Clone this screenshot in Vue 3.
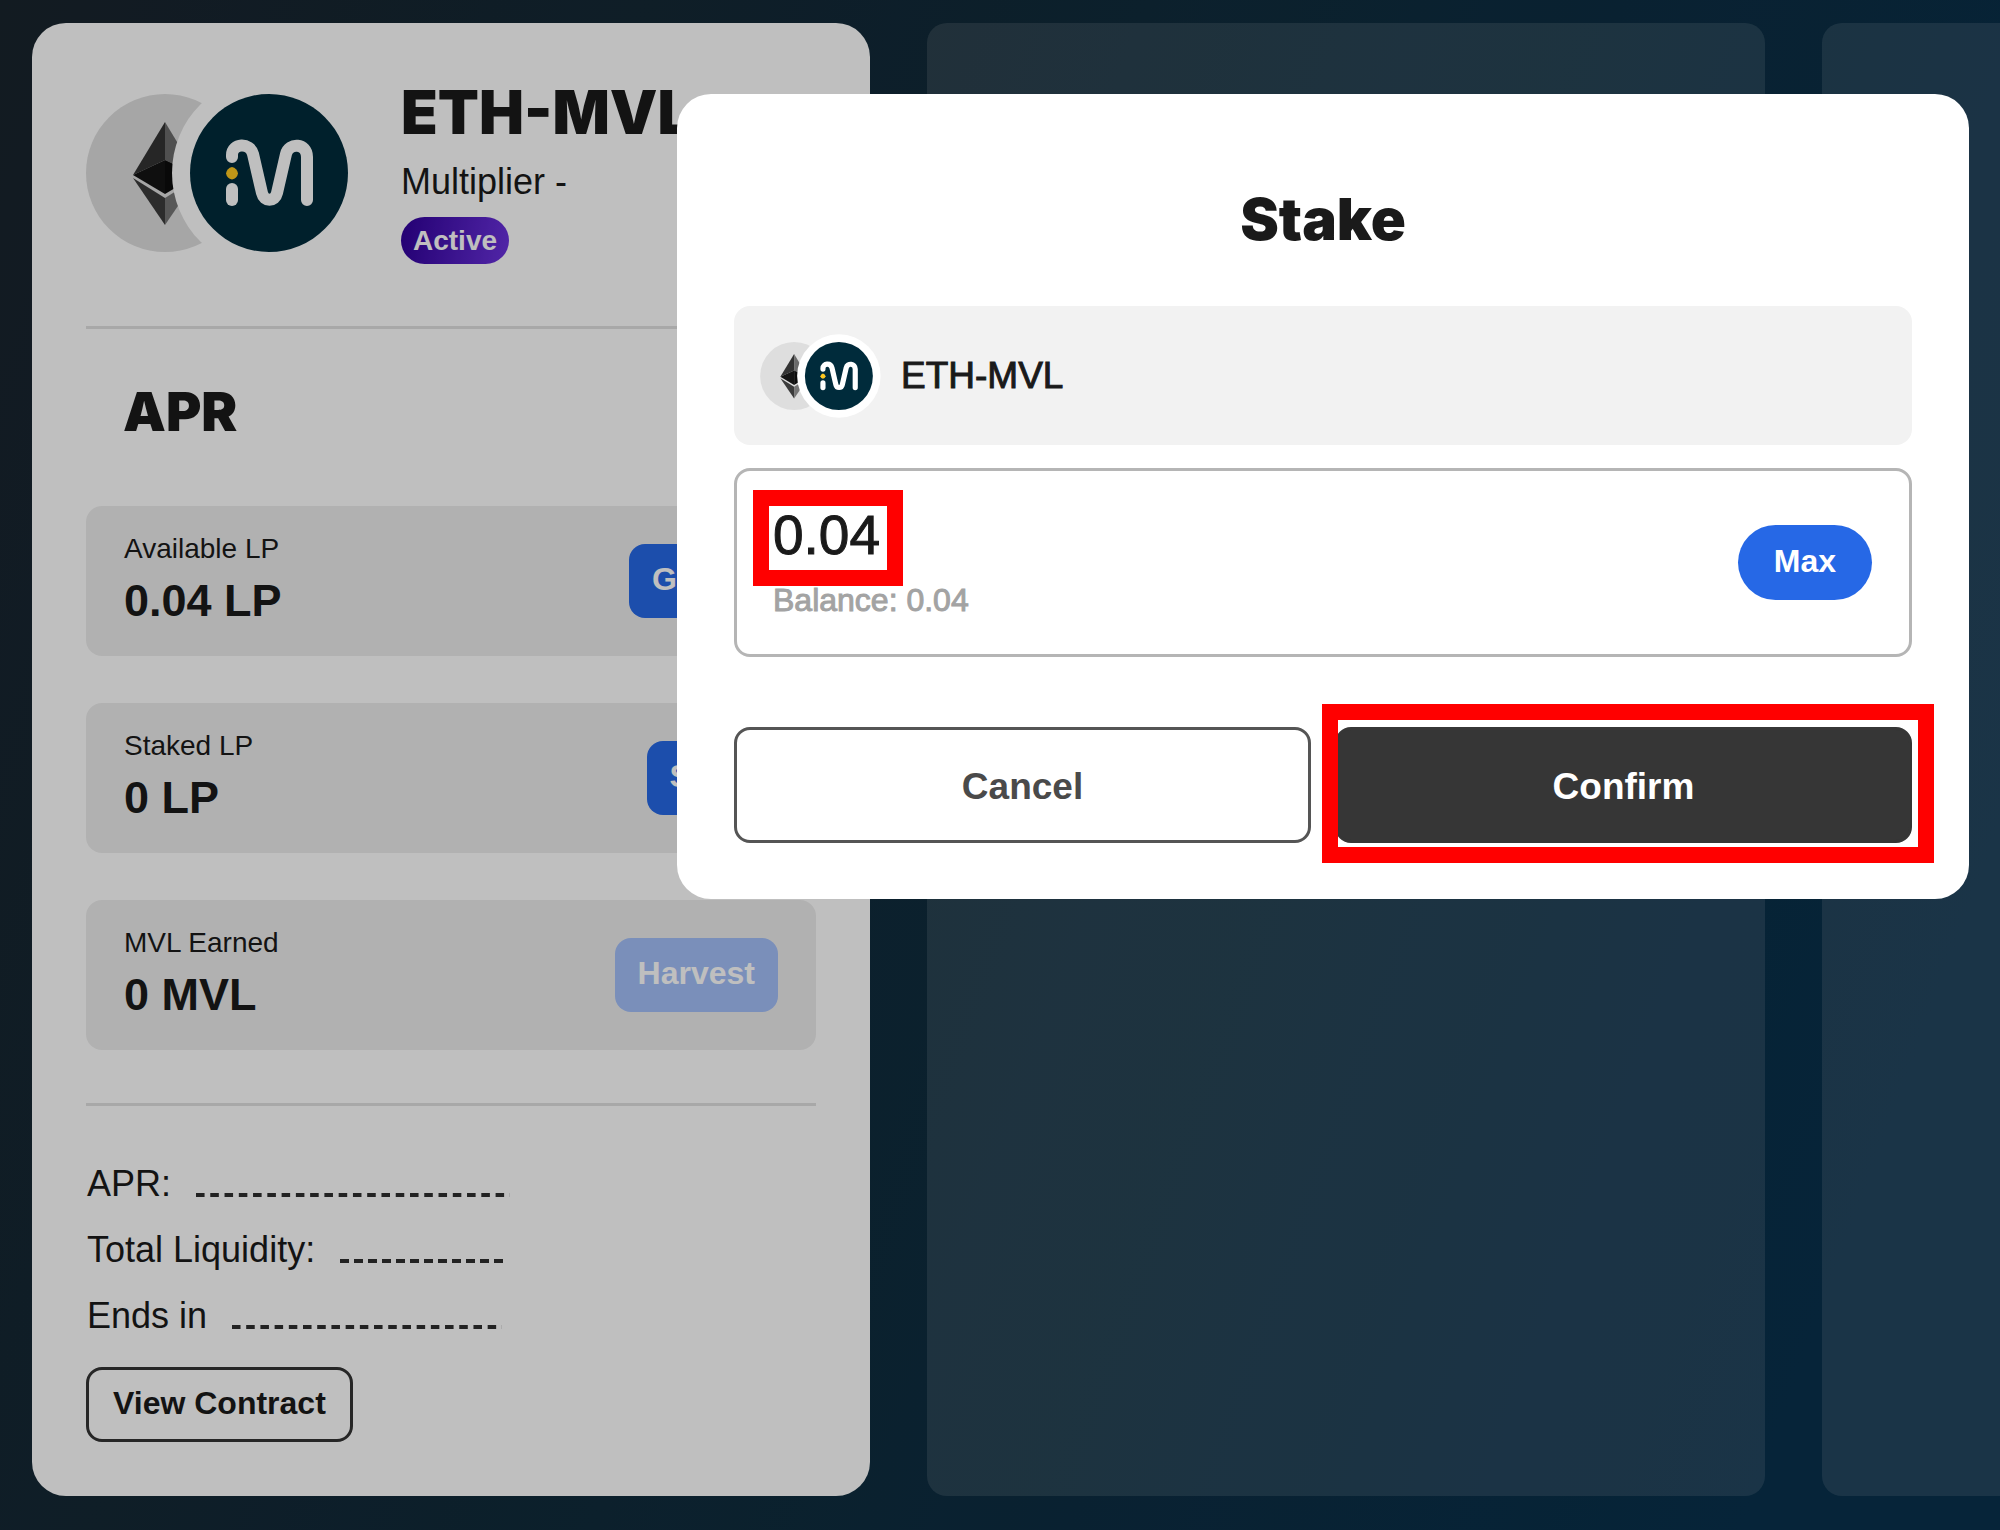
<script setup>
import { ref, h } from 'vue'

const amount = ref('0.04')

const stats = [
  { label: 'Available LP', value: '0.04 LP', action: 'Get LP', disabled: false },
  { label: 'Staked LP', value: '0 LP', action: 'Stake', disabled: false },
  { label: 'MVL Earned', value: '0 MVL', action: 'Harvest', disabled: true },
]

const details = [
  { label: 'APR:', width: 314 },
  { label: 'Total Liquidity:', width: 168 },
  { label: 'Ends in', width: 270 },
]

const path = (d, fill) => h('path', { d, fill })
const line = (d) =>
  h('path', { d, fill: 'none', stroke: '#fff', 'stroke-width': 12, 'stroke-linecap': 'round', 'stroke-linejoin': 'round' })

// Overlapping Ethereum and MVL coins
const PairIcon = () =>
  h('svg', { viewBox: '6 14 262 158', overflow: 'visible', 'aria-hidden': 'true' }, [
    h('circle', { cx: 85, cy: 93, r: 79, fill: '#dedede' }),
    path('M85 42 53 95l32-15z', '#333'),
    path('M85 42l32 53-32-15z', '#6b6b6b'),
    path('M53 95l32-15v34z', '#141414'),
    path('M117 95 85 80v34z', '#0c0c0c'),
    path('M53 98l32 20v27z', '#3b3b3b'),
    path('M117 98 85 118v27z', '#757575'),
    h('circle', { cx: 189, cy: 93, r: 97, fill: '#fff' }),
    h('circle', { cx: 189, cy: 93, r: 79, fill: '#002b3b' }),
    line('M152 77v-2c0-12 18-13 21-1l9 39c2 9 13 9 15 0l9-39c3-12 21-11 21 3v43'),
    line('M152 109v11'),
    path('M152 87q5 1 6 6.500q-1 5-6 6q-5-1-6-6q1-5.500 6-6.500z', '#ffc820'),
  ])
</script>

<template>
  <div class="page">
    <main class="pools">
      <section class="pool">
        <header class="pool-head">
          <PairIcon class="pair" />
          <div>
            <h1>ETH-MVL</h1>
            <p class="multiplier">Multiplier -</p>
            <span class="badge">Active</span>
          </div>
        </header>
        <hr />
        <div class="apr">
          <span>APR</span>
          <span class="apr-value">25%</span>
        </div>
        <div class="stats">
          <div v-for="s in stats" :key="s.label" class="stat">
            <div>
              <div class="stat-label">{{ s.label }}</div>
              <div class="stat-value">{{ s.value }}</div>
            </div>
            <button type="button" class="action" :disabled="s.disabled">{{ s.action }}</button>
          </div>
        </div>
        <hr />
        <div class="details">
          <div v-for="d in details" :key="d.label" class="detail">
            <span>{{ d.label }}</span>
            <span class="dashes" :style="{ width: d.width + 'px' }"></span>
          </div>
        </div>
        <button type="button" class="contract">View Contract</button>
      </section>
      <section class="empty"></section>
      <section class="empty"></section>
    </main>

    <div class="backdrop">
      <form class="modal" role="dialog" aria-labelledby="stake-title" @submit.prevent>
        <h2 id="stake-title">Stake</h2>
        <div class="token">
          <PairIcon class="pair-small" />
          <span>ETH-MVL</span>
        </div>
        <div class="amount">
          <div>
            <div class="amount-field marked">
              <input v-model="amount" type="text" aria-label="Amount to stake" />
            </div>
            <div class="balance">Balance: 0.04</div>
          </div>
          <button type="button" class="max">Max</button>
        </div>
        <div class="buttons">
          <button type="button" class="cancel">Cancel</button>
          <div class="confirm-wrap marked">
            <button type="submit" class="confirm">Confirm</button>
          </div>
        </div>
      </form>
    </div>
  </div>
</template>

<style>
body {
  margin: 0;
}
</style>

<style scoped>
.page {
  position: relative;
  min-height: 100vh;
  overflow: hidden;
  box-sizing: border-box;
  padding: 23px 32px 34px;
  background: linear-gradient(110deg, #19242d 0%, #102b3b 45%, #08304c 90%);
  font-family: "Liberation Sans", Arial, sans-serif;
  color: #1a1a1a;
}
* {
  box-sizing: border-box;
}
h1,
h2,
p {
  margin: 0;
}
button {
  font-family: inherit;
  font-weight: 700;
  font-size: 32px;
  line-height: 40px;
}
.pools {
  display: grid;
  grid-template-columns: repeat(3, 41.9vw);
  gap: 57px;
}
.pool {
  padding: 57px 54px 54px;
  border-radius: 34px;
  background: #fff;
}
.empty {
  border-radius: 20px;
  background: rgba(255, 255, 255, 0.11);
}
.pool-head {
  display: flex;
  align-items: center;
  gap: 53px;
}
.pair {
  flex: none;
  width: 262px;
  height: 158px;
  margin-top: 2px;
}
h1,
h2,
.apr {
  font-family: Inter, "Liberation Sans", sans-serif;
  font-weight: 900;
  line-height: 64px;
}
h1 {
  font-size: 60px;
}
.multiplier {
  margin-top: 16px;
  font-size: 36px;
  line-height: 44px;
}
.badge {
  display: block;
  width: fit-content;
  margin-top: 13px;
  padding: 0 12px;
  border-radius: 24px;
  background: linear-gradient(100deg, #2f0099, #6d33e0);
  color: #fff;
  font-size: 28px;
  font-weight: 700;
  line-height: 47px;
}
hr {
  height: 3px;
  margin: 62px 0 51px;
  border: 0;
  background: #e0e0e0;
}
.apr {
  display: flex;
  justify-content: space-between;
  padding: 0 32px 0 37px;
  font-size: 54px;
}
.apr-value {
  font-family: "Liberation Sans", Arial, sans-serif;
}
.stats {
  display: grid;
  gap: 47px;
  margin: 62px 0 53px;
}
.stat {
  display: flex;
  align-items: center;
  justify-content: space-between;
  min-height: 150px;
  padding: 0 38px;
  border-radius: 16px;
  background: #ededed;
}
.stat-label {
  font-size: 28px;
  line-height: 32px;
}
.stat-value {
  margin-top: 8px;
  font-size: 45px;
  font-weight: 700;
  line-height: 56px;
}
.action {
  padding: 15px 23px 19px;
  border: 0;
  border-radius: 16px;
  background: #2668e6;
  color: #fff;
}
.action:disabled {
  background: #a3bff9;
}
.stats + hr {
  margin: 0 0 45px;
}
.detail {
  display: flex;
  gap: 25px;
  padding-left: 1px;
  font-size: 36px;
  line-height: 66px;
}
.dashes {
  height: 4px;
  margin-top: 42px;
  background: linear-gradient(90deg, #2e2e2e 62%, transparent 62%) 0 0 / 14px 4px;
  background-repeat: round;
}
.contract {
  margin-top: 18px;
  padding: 13px 24px 16px;
  border: 3px solid #333;
  border-radius: 16px;
  background: transparent;
  color: #1a1a1a;
}
.backdrop {
  position: absolute;
  inset: 0;
  display: flex;
  justify-content: flex-end;
  align-items: flex-start;
  padding: 94px 31px;
  background: rgba(0, 0, 0, 0.25);
}
.modal {
  width: 64.6vw;
  padding: 93px 57px 56px;
  border-radius: 34px;
  background: #fff;
}
h2 {
  font-size: 58px;
  text-align: center;
}
.token {
  display: flex;
  align-items: center;
  gap: 28px;
  min-height: 139px;
  margin-top: 55px;
  padding: 0 26px;
  border-radius: 16px;
  background: #f2f2f2;
  font-size: 37px;
  -webkit-text-stroke: 1px;
}
.pair-small {
  width: 113px;
  height: 68px;
}
.amount {
  display: flex;
  align-items: center;
  justify-content: space-between;
  min-height: 189px;
  margin-top: 23px;
  padding: 0 37px 0 36px;
  border: 3px solid #b5b5b5;
  border-radius: 16px;
}
.amount-field {
  width: 114px;
}
.amount-field input {
  display: block;
  width: 100%;
  height: 60px;
  padding: 0;
  border: 0;
  outline: 0;
  background: transparent;
  color: #1a1a1a;
  font-family: inherit;
  font-size: 55px;
  line-height: 60px;
  -webkit-text-stroke: 1px;
}
.balance {
  margin-top: 15px;
  color: #a3a3a3;
  font-size: 32px;
  line-height: 40px;
  -webkit-text-stroke: 1px;
}
.max {
  padding: 16px 36px 19px;
  border: 0;
  border-radius: 38px;
  background: #2668e6;
  color: #fff;
}
.buttons {
  display: grid;
  grid-template-columns: 1fr 1fr;
  gap: 24px;
  margin-top: 70px;
}
.cancel,
.confirm {
  width: 100%;
  height: 116px;
  padding: 4px 0 0;
  border: 3px solid #555;
  border-radius: 16px;
  background: #fff;
  color: #4a4a4a;
  font-size: 37px;
}
.confirm {
  border-color: #363636;
  background: #363636;
  color: #fff;
}
.marked {
  position: relative;
}
.marked::after {
  content: "";
  position: absolute;
  inset: -15px -16px -21px -20px;
  border: 16px solid #f00;
  pointer-events: none;
}
.confirm-wrap::after {
  inset: -23px -22px -20px -13px;
}
</style>
